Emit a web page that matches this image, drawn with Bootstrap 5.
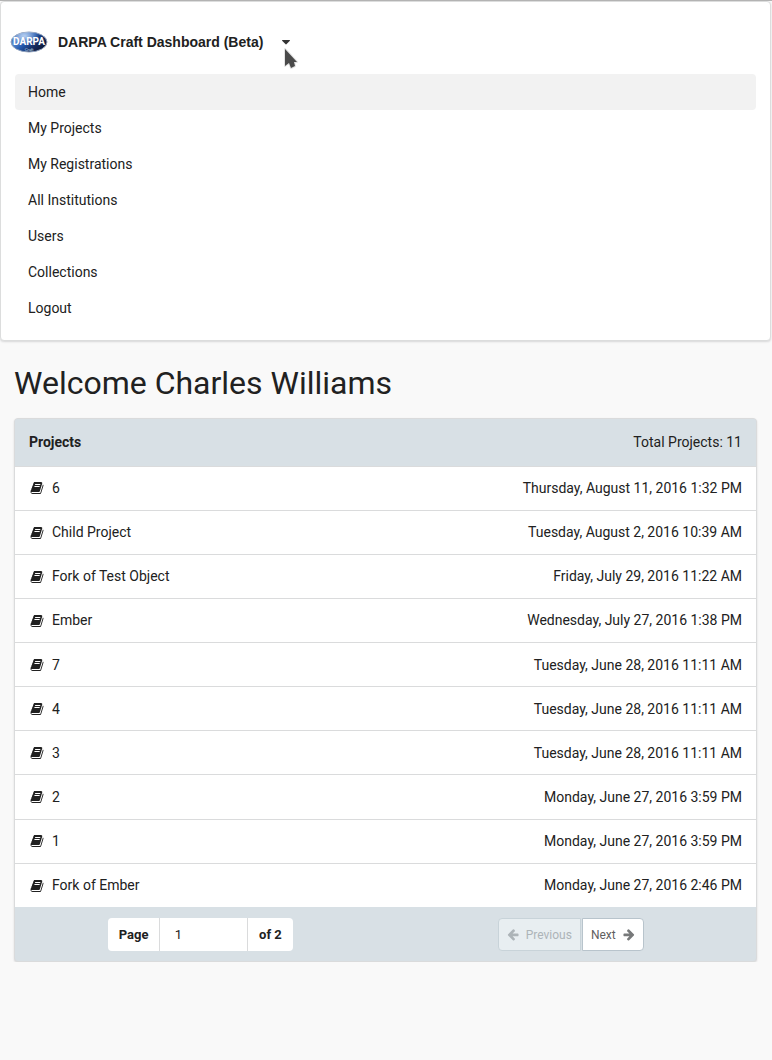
<!DOCTYPE html>
<html lang="en">
<head>
<meta charset="utf-8">
<meta name="viewport" content="width=device-width, initial-scale=1">
<title>DARPA Craft Dashboard (Beta)</title>
<link href="https://cdn.jsdelivr.net/npm/bootstrap@5.3.0/dist/css/bootstrap.min.css" rel="stylesheet">
<style>
  body { background: #f9f9f9; color: #212121; font: 14px/20px Roboto, "Liberation Sans", sans-serif; border-top: 1px solid #b3b3b3; }
  .topbar { margin-right: 1px; padding: 0 14px 14px; background: #fff; border: 1px solid #dcdddd; border-radius: 4px; box-shadow: 0 1px 2px #22242626; }
  .brand-row { height: 72px; padding-top: 8px; margin-left: -5px; }
  .brand-name { margin-left: 10px; font: bold 14px/20px "Liberation Sans", sans-serif; }
  .menu-toggle { position: relative; margin-left: 16px; width: 14px; height: 20px; line-height: 14px; }
  .menu-toggle .caret { width: 14px; height: 14px; }
  .pointer { position: absolute; left: 4px; top: 15px; pointer-events: none; }
  .topbar .nav-link { padding: 8px 13px; color: #212121; border-radius: 4px; }
  .topbar .nav-link.active { background: #f2f2f2; }
  .welcome { margin: 22px 0 14px; font-size: 32px; line-height: 41px; font-weight: 400; }
  .page-body { padding: 0 15px 0 14px; }
  .panel { border: 1px solid #dadbdc; border-radius: 4px; box-shadow: 0 1px 2px #22242626; overflow: hidden; background: #d8e0e5; }
  .projects { height: 488px; margin: 0; color: #212121; --bs-table-color: #212121; --bs-table-bg: #fff; border-color: #dadbdc; }
  .projects th, .projects td { padding: 11px 14px; vertical-align: middle; }
  .projects thead th { height: 47px; background: #d8e0e5; }
  .projects tbody tr:last-child td { border-bottom: 0; }
  .projects svg { width: 14px; height: 14px; margin: -2px 8px 0 1px; fill: #212121; }
  .pager { padding: 11px 0 10px; }
  .page-box { width: 185px; height: 33px; border-radius: 4px; overflow: hidden; background: #fff; font-weight: 700; font-size: 13px; }
  .page-box label, .page-box span { padding: 0 11px; }
  .page-box input { width: 89px; height: 33px; padding: 0 15px; border: 1px solid #dadbdc; border-width: 0 1px; color: #212121; }
  .page-box label { padding-right: 10px; }
  .pager .btn { height: 33px; padding: 0 8px; gap: 7px; font-size: 12px; line-height: 20px; color: #5f6061; background: #fff; border: 1px solid #b8c4cc; border-radius: 0 4px 4px 0; }
  .pager .btn:disabled { color: #adb4b8; background: #e8eef1; border-color: #c8d3d9; border-radius: 4px 0 0 4px; opacity: 1; }
  .pager .btn svg { width: 12px; height: 13px; }
  .pager .steps { gap: 1px; }
</style>
</head>
<body>
<svg width="0" height="0" class="d-none" aria-hidden="true">
  <symbol id="book" viewBox="0 0 1792 1792"><path d="M1703 478q40 57 18 129l-275 906q-19 64-76.5 107.5t-122.5 43.5h-923q-77 0-148.5-53.5t-99.5-131.5q-24-67-2-127 0-4 3-27t4-37q1-8-3-21.5t-3-19.5q2-11 8-21t16.5-23.5 16.5-23.5q23-38 45-91.5t30-91.5q3-10 .5-30t-.5-28q3-11 17-28t17-23q21-36 42-92t25-90q1-9-2.5-32t.5-28q4-13 22-30.5t22-22.5q19-26 42.5-84.5t27.5-96.5q1-8-3-25.5t-2-26.5q2-8 9-18t18-23 17-21q8-12 16.5-30.5t15-35 16-36 19.5-32 26.5-23.5 36-11.5 47.5 5.5l-1 3q38-9 51-9h761q74 0 114 56t18 130l-274 906q-36 119-71.5 153.5t-128.5 34.5h-869q-27 0-38 15-11 16-1 43 24 70 144 70h923q29 0 56-15.5t35-41.5l300-987q7-22 5-57 38 15 59 43zm-1064 2q-4 13 2 22.5t20 9.5h608q13 0 25.5-9.5t16.5-22.5l21-64q4-13-2-22.5t-20-9.5h-608q-13 0-25.5 9.5t-16.5 22.5zm-83 256q-4 13 2 22.5t20 9.5h608q13 0 25.5-9.5t16.5-22.5l21-64q4-13-2-22.5t-20-9.5h-608q-13 0-25.5 9.5t-16.5 22.5z"/></symbol>
  <symbol id="arrow" viewBox="100 0 1600 1792"><path d="M1664 896v128q0 53-32.5 90.5t-84.5 37.5h-704l293 294q38 36 38 90t-38 90l-75 76q-37 37-90 37-52 0-91-37l-651-652q-37-37-37-90 0-52 37-91l651-650q38-38 91-38 52 0 90 38l75 74q38 38 38 91t-38 91l-293 293h704q52 0 84.5 37.5t32.5 90.5z"/></symbol>
</svg>

<header class="topbar">
  <div class="brand-row d-flex align-items-center">
    <svg width="38" height="22" viewBox="0 0 38 22" role="img" aria-label="DARPA Craft">
      <defs>
        <linearGradient id="oval" x1="0" y1="0" x2="1" y2=".6"><stop offset="0" stop-color="#1c4a9c"/><stop offset=".3" stop-color="#5b8bd0"/><stop offset=".55" stop-color="#2257ac"/><stop offset=".8" stop-color="#132a5c"/><stop offset="1" stop-color="#0c1a3c"/></linearGradient>
        <radialGradient id="shine" cx=".38" cy=".2" r=".4"><stop offset="0" stop-color="#cfe2fa" stop-opacity=".8"/><stop offset="1" stop-color="#cfe2fa" stop-opacity="0"/></radialGradient>
      </defs>
      <ellipse cx="19" cy="11" rx="18" ry="10" fill="url(#oval)" stroke="#8ea0bd"/>
      <ellipse cx="19" cy="11" rx="18" ry="10" fill="url(#shine)"/>
      <text x="19" y="14" text-anchor="middle" font-family="Roboto, sans-serif" font-weight="bold" font-size="10" fill="#fff">DARPA</text>
      <text x="19" y="20" text-anchor="middle" font-family="Liberation Sans, sans-serif" font-size="4" fill="#dce6f5">Craft</text>
    </svg>
    <span class="brand-name">DARPA Craft Dashboard (Beta)</span>
    <button class="menu-toggle btn p-0 border-0" type="button" aria-label="Toggle menu" data-bs-toggle="collapse" data-bs-target="#menu" aria-expanded="true">
      <svg class="caret" viewBox="0 0 1792 1792" fill="#333"><path d="M1408 704q0 26-19 45l-448 448q-19 19-45 19t-45-19l-448-448q-19-19-19-45t19-45 45-19h896q26 0 45 19t19 45z"/></svg>
      <svg class="pointer" width="16" height="24" viewBox="0 0 16 24"><path d="M2 2v17l4-3 2 5 4-2-1-4h3z" fill="#4a4a4a" stroke="#e4e4e4" stroke-width="2" stroke-linejoin="round" paint-order="stroke"/></svg>
    </button>
  </div>
  <nav id="menu" class="collapse show">
    <div class="nav flex-column">
      <a class="nav-link active" href="#" aria-current="page">Home</a>
      <a class="nav-link" href="#">My Projects</a>
      <a class="nav-link" href="#">My Registrations</a>
      <a class="nav-link" href="#">All Institutions</a>
      <a class="nav-link" href="#">Users</a>
      <a class="nav-link" href="#">Collections</a>
      <a class="nav-link" href="#">Logout</a>
    </div>
  </nav>
</header>

<main class="page-body">
  <h1 class="welcome">Welcome Charles Williams</h1>
  <section class="panel">
    <table class="table projects">
      <thead><tr><th scope="col">Projects</th><th scope="col" class="text-end fw-normal">Total Projects: 11</th></tr></thead>
      <tbody>
        <tr><td><svg><use href="#book"/></svg>6</td><td class="text-end">Thursday, August 11, 2016 1:32 PM</td></tr>
        <tr><td><svg><use href="#book"/></svg>Child Project</td><td class="text-end">Tuesday, August 2, 2016 10:39 AM</td></tr>
        <tr><td><svg><use href="#book"/></svg>Fork of Test Object</td><td class="text-end">Friday, July 29, 2016 11:22 AM</td></tr>
        <tr><td><svg><use href="#book"/></svg>Ember</td><td class="text-end">Wednesday, July 27, 2016 1:38 PM</td></tr>
        <tr><td><svg><use href="#book"/></svg>7</td><td class="text-end">Tuesday, June 28, 2016 11:11 AM</td></tr>
        <tr><td><svg><use href="#book"/></svg>4</td><td class="text-end">Tuesday, June 28, 2016 11:11 AM</td></tr>
        <tr><td><svg><use href="#book"/></svg>3</td><td class="text-end">Tuesday, June 28, 2016 11:11 AM</td></tr>
        <tr><td><svg><use href="#book"/></svg>2</td><td class="text-end">Monday, June 27, 2016 3:59 PM</td></tr>
        <tr><td><svg><use href="#book"/></svg>1</td><td class="text-end">Monday, June 27, 2016 3:59 PM</td></tr>
        <tr><td><svg><use href="#book"/></svg>Fork of Ember</td><td class="text-end">Monday, June 27, 2016 2:46 PM</td></tr>
      </tbody>
    </table>
    <div class="pager row g-0">
      <div class="col-6 d-flex justify-content-center">
        <div class="page-box d-flex align-items-center justify-content-between">
          <label for="page">Page</label>
          <input id="page" type="text" value="1">
          <span>of 2</span>
        </div>
      </div>
      <div class="steps col-6 d-flex justify-content-center">
        <button class="btn d-flex align-items-center" type="button" disabled><svg fill="#adb4b8"><use href="#arrow"/></svg>Previous</button>
        <button class="btn d-flex align-items-center" type="button">Next<svg fill="#77797a" viewBox="0 0 12 13"><use href="#arrow" width="12" height="13" transform="matrix(-1 0 0 1 12 0)"/></svg></button>
      </div>
    </div>
  </section>
</main>
<script src="https://cdn.jsdelivr.net/npm/bootstrap@5.3.0/dist/js/bootstrap.bundle.min.js"></script>
</body>
</html>
